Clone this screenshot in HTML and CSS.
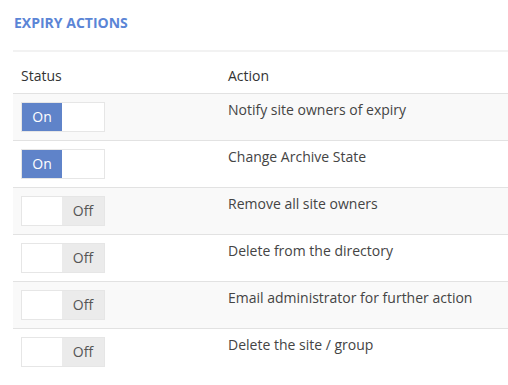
FILE: index.html
```html
<!DOCTYPE html>
<html lang="en">

<head>
    <meta charset="UTF-8">
    <title>Expiry actions</title>
    <link rel="stylesheet" href="styles.css">
</head>

<body>
    <div class="panel">
        <h2 class="titulo">Expiry Actions</h2>
        <table class="tabla">
            <thead>
                <tr>
                    <th class="colEstado">Status</th>
                    <th>Action</th>
                </tr>
            </thead>
            <tbody>
                <tr>
                    <td><div class="toggle on"><span class="lado activo">On</span><span class="lado"></span></div></td>
                    <td>Notify site owners of expiry</td>
                </tr>
                <tr>
                    <td><div class="toggle on"><span class="lado activo">On</span><span class="lado"></span></div></td>
                    <td>Change Archive State</td>
                </tr>
                <tr>
                    <td><div class="toggle off"><span class="lado"></span><span class="lado apagado">Off</span></div></td>
                    <td>Remove all site owners</td>
                </tr>
                <tr>
                    <td><div class="toggle off"><span class="lado"></span><span class="lado apagado">Off</span></div></td>
                    <td>Delete from the directory</td>
                </tr>
                <tr>
                    <td><div class="toggle off"><span class="lado"></span><span class="lado apagado">Off</span></div></td>
                    <td>Email administrator for further action</td>
                </tr>
                <tr>
                    <td><div class="toggle off"><span class="lado"></span><span class="lado apagado">Off</span></div></td>
                    <td>Delete the site / group</td>
                </tr>
            </tbody>
        </table>
    </div>
</body>

</html>
```

FILE: styles.css
```css
* {
    margin: 0;
    padding: 0;
    box-sizing: border-box;
}

body {
    background-color: white;
    font-family: "Open Sans", "Noto Sans", sans-serif;
    font-size: 14px;
    color: #444;
}

.panel {
    padding: 13px 0 0 13px;
}

.titulo {
    font-size: 14px;
    font-weight: bold;
    text-transform: uppercase;
    color: #5b85d6;
    padding-left: 1px;
    height: 39px;
    line-height: 19px;
    border-bottom: 2px solid #f2f2f2;
}

.tabla {
    width: 100%;
    border-collapse: collapse;
}

.tabla th {
    text-align: left;
    font-weight: normal;
    color: #333;
    padding: 15px 8px 8px 8px;
    line-height: 18px;
    border-bottom: 1px solid #e2e2e2;
}

.tabla th.colEstado {
    width: 207px;
}

.tabla td {
    vertical-align: top;
    padding: 8px;
    line-height: 16px;
    border-bottom: 1px solid #e2e2e2;
}

.tabla tbody tr:nth-child(odd) {
    background-color: #f9f9f9;
}

.tabla tbody tr:last-child td {
    border-bottom: 0;
}

.toggle {
    display: flex;
    width: 84px;
    height: 30px;
    border: 1px solid #e6e6e6;
    background-color: white;
}

.lado {
    flex: 1;
    display: flex;
    align-items: center;
    justify-content: center;
    font-size: 14px;
}

.activo {
    background-color: #5f83c9;
    color: white;
    flex: 0 0 40px;
}

.apagado {
    background-color: #ebebeb;
    color: #555;
}

.off .lado:first-child {
    flex: 0 0 40px;
}
```
